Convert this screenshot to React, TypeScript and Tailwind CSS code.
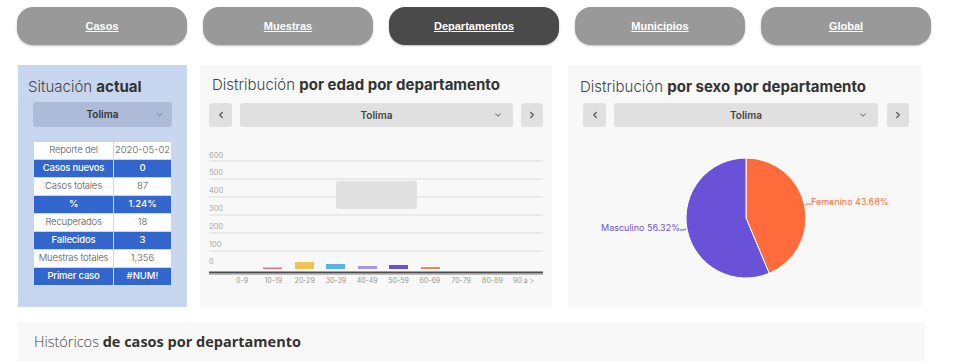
import { ChevronDown, ChevronLeft, ChevronRight } from "lucide-react";

const tabs = ["Casos", "Muestras", "Departamentos", "Municipios", "Global"];

const rows = [
  { label: "Reporte del", value: "2020-05-02", blue: false },
  { label: "Casos nuevos", value: "0", blue: true },
  { label: "Casos totales", value: "87", blue: false },
  { label: "%", value: "1.24%", blue: true },
  { label: "Recuperados", value: "18", blue: false },
  { label: "Fallecidos", value: "3", blue: true },
  { label: "Muestras totales", value: "1,356", blue: false },
  { label: "Primer caso", value: "#NUM!", blue: true },
];

const ages = ["0-9", "10-19", "20-29", "30-39", "40-49", "50-59", "60-69", "70-79", "80-89", "90 a >"];

// barras: [x, alto, color]
const bars: [number, number, string][] = [
  [63, 1.5, "#e8707a"],
  [95, 7, "#f1c353"],
  [126, 5, "#58b4e4"],
  [158, 3, "#a996d6"],
  [189, 4, "#6b4fd9"],
  [221, 2, "#ff8257"],
];

function NavRow({ selectW, pl, gapR }: { selectW: string; pl: string; gapR: string }) {
  return (
    <div className={`flex items-center ${pl}`}>
      <button className="w-[23px] h-[24px] rounded-[3px] bg-[#e0e0e0] flex items-center justify-center text-[#555]">
        <ChevronLeft size={10} strokeWidth={3} />
      </button>
      <div className={`ml-[8px] ${selectW} h-[24px] rounded-[3px] bg-[#e0e0e0] flex items-center relative`}>
        <span className="flex-1 text-center text-[10px] font-semibold text-[#444]">Tolima</span>
        <ChevronDown size={10} strokeWidth={2.5} className="absolute right-[10px] text-[#777]" />
      </div>
      <button className={`${gapR} w-[22px] h-[24px] rounded-[3px] bg-[#e0e0e0] flex items-center justify-center text-[#555]`}>
        <ChevronRight size={10} strokeWidth={3} />
      </button>
    </div>
  );
}

function AgeChart() {
  const lines = [34, 52, 70, 88, 106, 124];
  const labels = ["600", "500", "400", "300", "200", "100", "0"];
  return (
    <svg width="352" height="180" className="block">
      {labels.map((l, i) => (
        <text key={l} x="9" y={30.5 + i * 17.8} fontSize="7.5" fill="#aaa" fontFamily="Inter, sans-serif">
          {l}
        </text>
      ))}
      {lines.map((y) => (
        <line key={y} x1="9" x2="343" y1={y} y2={y} stroke="#dcdcdc" strokeWidth="1" />
      ))}
      <rect x="136" y="54" width="81" height="28" rx="3" fill="#e0e0e0" />
      {bars.map(([x, h, c]) => (
        <rect key={x} x={x} y={142 - h} width="19" height={h} fill={c} />
      ))}
      <line x1="9" x2="343" y1="145.5" y2="145.5" stroke="#4a4a4a" strokeWidth="2" />
      <line x1="9" x2="343" y1="147.5" y2="147.5" stroke="#bbb" strokeWidth="1" />
      {ages.map((a, i) => (
        <text key={a} x={42 + i * 31.3} y="155.5" fontSize="7" fill="#999" textAnchor="middle" fontFamily="Inter, sans-serif">
          {a}
        </text>
      ))}
    </svg>
  );
}

function SexChart() {
  const cx = 178;
  const cy = 91;
  const r = 60;
  const a = (43.68 / 100) * Math.PI * 2;
  const ex = cx + r * Math.sin(a);
  const ey = cy - r * Math.cos(a);
  return (
    <svg width="354" height="180" className="block">
      <path d={`M${cx},${cy} L${cx},${cy - r} A${r},${r} 0 0 1 ${ex},${ey} Z`} fill="#ff6b3a" stroke="#fff" strokeWidth="1" />
      <path d={`M${cx},${cy} L${ex},${ey} A${r},${r} 0 1 1 ${cx},${cy - r} Z`} fill="#6a52d8" stroke="#fff" strokeWidth="1" />
      <polyline points="237,78 239,77 243,77" fill="none" stroke="#ff6b3a" strokeWidth="1" />
      <text x="243" y="77.5" fontSize="9" fill="#ff6b3a" fontFamily="Inter, sans-serif">
        Femenino 43.68%
      </text>
      <polyline points="118,102 116,103 112,103" fill="none" stroke="#6a52d8" strokeWidth="1" />
      <text x="112" y="103.5" fontSize="9" fill="#6a52d8" textAnchor="end" fontFamily="Inter, sans-serif">
        Masculino 56.32%
      </text>
    </svg>
  );
}

export default function App() {
  return (
    <div className="w-[970px] h-[361px] overflow-hidden bg-white font-['Inter',sans-serif]">
      <div className="flex gap-[16px] pl-[17px] pt-[7px]">
        {tabs.map((t) => (
          <div
            key={t}
            className={`w-[170px] h-[38px] rounded-[16px] flex items-center justify-center shadow-[0_1px_2px_rgba(0,0,0,0.25)] ${
              t === "Departamentos" ? "bg-[#4a4a4a]" : "bg-[#999999]"
            }`}
          >
            <span className="text-white underline text-[11px] font-bold font-['Liberation_Sans',sans-serif]">{t}</span>
          </div>
        ))}
      </div>

      <div className="flex pl-[18px] mt-[20px]">
        {/* Situacion actual */}
        <div className="w-[169px] h-[242px] bg-[#c8d6f0] pt-[13px]">
          <h2 className="pl-[10px] text-[15px] leading-[18px] text-[#444] font-light">
            Situación <b className="font-bold text-[#333]">actual</b>
          </h2>
          <div className="mx-[15px] mt-[6px] h-[25px] rounded-[3px] bg-[#adbbd8] flex items-center relative">
            <span className="flex-1 text-center text-[10px] font-semibold text-[#333]">Tolima</span>
            <ChevronDown size={9} strokeWidth={2.5} className="absolute right-[8px] text-[#777]" />
          </div>
          <table className="ml-[15px] mt-[14px] w-[139px] border-collapse text-[9.5px]">
            <tbody>
              {rows.map((r) => (
                <tr key={r.label} className={r.blue ? "bg-[#3366cc] text-white font-medium" : "bg-white text-[#555] font-light"}>
                  <td className="h-[18px] w-[80px] border border-[#c8d6f0] text-center p-0 tracking-[-0.2px]">{r.label}</td>
                  <td className="h-[18px] border border-[#c8d6f0] text-center p-0">{r.value}</td>
                </tr>
              ))}
            </tbody>
          </table>
        </div>

        {/* Distribucion por edad */}
        <div className="ml-[13px] w-[352px] h-[242px] bg-[#f8f8f8] pt-[10px]">
          <h2 className="pl-[12px] text-[15px] leading-[20px] text-[#444] font-light">
            Distribución <b className="font-bold text-[#333]">por edad por departamento</b>
          </h2>
          <div className="mt-[8px]">
            <NavRow selectW="w-[273px]" pl="pl-[9px]" gapR="ml-[8px]" />
          </div>
          <AgeChart />
        </div>

        {/* Distribucion por sexo */}
        <div className="ml-[16px] w-[354px] h-[242px] bg-[#f8f8f8] pt-[12px]">
          <h2 className="pl-[12px] text-[15px] leading-[20px] text-[#444] font-light">
            Distribución <b className="font-bold text-[#333]">por sexo por departamento</b>
          </h2>
          <div className="mt-[6px]">
            <NavRow selectW="w-[264px]" pl="pl-[15px]" gapR="ml-[9px]" />
          </div>
          <SexChart />
        </div>
      </div>

      <div className="ml-[18px] mt-[15px] w-[907px] h-[60px] bg-[#f8f8f8] pt-[10px] pl-[16px]">
        <h2 className="text-[14.5px] leading-[20px] text-[#444] font-light font-['Open_Sans',sans-serif]">
          Históricos <b className="font-bold text-[#333]">de casos por departamento</b>
        </h2>
      </div>
    </div>
  );
}
